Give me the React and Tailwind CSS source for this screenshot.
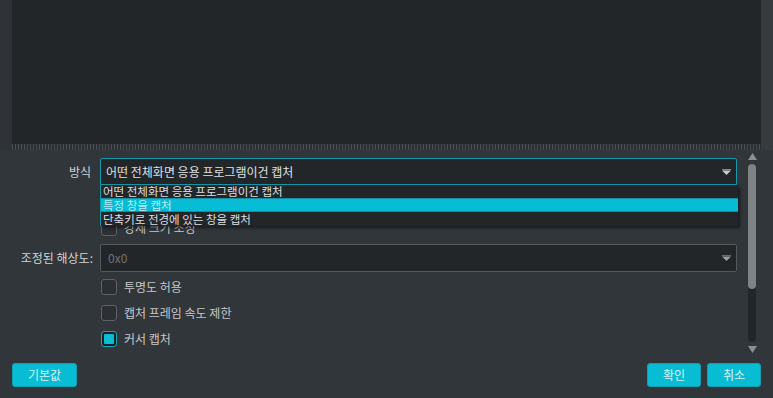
const font = { fontFamily: '"Noto Sans CJK KR", "Noto Sans", sans-serif' };

function Arrow({ color = "#c9cbcd" }) {
  return (
    <svg width="9" height="6" viewBox="0 0 9 6">
      <rect x="0" y="0" width="9" height="1" fill={color} opacity="0.6" />
      <path d="M0 1.5 H9 L4.5 6 Z" fill={color} />
    </svg>
  );
}

function Check({ label, checked }) {
  return (
    <div className="flex items-center h-4 gap-[7px]">
      {checked ? (
        <div className="w-4 h-4 rounded-[3px] border border-[#17a5b6] bg-[#1d2226] flex items-center justify-center">
          <div className="w-[10px] h-[10px] rounded-[1px] bg-[#0abcd3]" />
        </div>
      ) : (
        <div className="w-4 h-4 rounded-[3px] border border-[#5e6267] bg-[#2c3035]" />
      )}
      <span className="text-[12px] leading-none text-[#c5c7c9]">{label}</span>
    </div>
  );
}

export default function App() {
  return (
    <div
      className="w-[773px] h-[398px] bg-[#31363b] flex flex-col overflow-hidden"
      style={font}
    >
      <div className="flex h-[150px]">
        <div className="w-3 bg-[#2f3338]" />
        <div className="w-[749px] flex flex-col">
          <div className="h-[144px] bg-[#232629]" />
          <div className="h-[6px] bg-[repeating-linear-gradient(90deg,#4b5056_0px,#4b5056_1px,#2b2f33_1px,#2b2f33_3px)]" />
        </div>
        <div className="flex-1 bg-[#363b40]" />
      </div>

      <div className="flex h-[205px]">
        <div className="w-[737px] flex flex-col pt-2">
          <div className="flex items-center relative">
            <div className="w-[93px] text-right text-[12px] text-[#d2d4d6] pr-[2px]">방식</div>
            <div className="ml-[7px] w-[637px] h-[27px] border border-[#159aab] rounded-t-[2px] bg-[#232629] flex items-center justify-between pl-[5px] pr-[5px]">
              <span className="text-[12px] text-[#dfe1e3]">어떤 전체화면 응용 프로그램이건 캡처</span>
              <Arrow />
            </div>
            <div className="absolute left-[100px] top-[27px] w-[638px] h-[41px] bg-[#232629] border-l border-[#159aab] shadow-[2px_2px_3px_rgba(0,0,0,0.5)] flex flex-col text-[11.5px] leading-[11px] z-10">
              <div className="h-[13px] flex items-center pl-[2px] text-[#dcdee0]">어떤 전체화면 응용 프로그램이건 캡처</div>
              <div className="h-[14px] flex items-center pl-[2px] bg-[#07bcd5] border-y border-[#1690a1] text-[#b8ecf4]">특정 창을 캡처</div>
              <div className="h-[14px] flex items-center pl-[2px] text-[#dcdee0]">단축키로 전경에 있는 창을 캡처</div>
            </div>
          </div>

          <div className="pl-[101px] mt-[35px]">
            <Check label="강제 크기 조정" />
          </div>

          <div className="flex items-center mt-2">
            <div className="w-[93px] text-right text-[12px] text-[#d2d4d6]">조정된 해상도:</div>
            <div className="ml-[7px] w-[637px] h-[28px] border border-[#54595e] rounded-[2px] bg-[#232629] flex items-center justify-between pl-[7px] pr-[5px]">
              <span className="text-[12px] text-[#6f7377]">0x0</span>
              <Arrow color="#9a9da0" />
            </div>
          </div>

          <div className="pl-[101px] mt-[7px] flex flex-col gap-[10px]">
            <Check label="투명도 허용" />
            <Check label="캡처 프레임 속도 제한" />
            <Check label="커서 캡처" checked />
          </div>
        </div>

        <div className="ml-[11px] w-2 flex flex-col items-center pt-[3px]">
          <svg width="9" height="7" viewBox="0 0 9 7">
            <path d="M4.5 0 L9 7 H0 Z" fill="#8d9093" />
          </svg>
          <div className="mt-[4px] w-2 h-[178px] rounded-full bg-[#232629] flex flex-col">
            <div className="h-[125px] rounded-full bg-[#7f8386]" />
          </div>
          <svg className="mt-[4px]" width="9" height="7" viewBox="0 0 9 7">
            <path d="M0 0 H9 L4.5 7 Z" fill="#8d9093" />
          </svg>
        </div>
      </div>

      <div className="flex items-start pt-2 px-3">
        <button className="w-[65px] h-6 rounded-[3px] bg-[#08bcd4] border border-[#139fb2] text-[12px] text-[#d6f3f7]">
          기본값
        </button>
        <div className="flex-1" />
        <button className="w-[54px] h-6 rounded-[3px] bg-[#08bcd4] border border-[#139fb2] text-[12px] text-[#d6f3f7]">
          확인
        </button>
        <button className="ml-[6px] w-[54px] h-6 rounded-[3px] bg-[#08bcd4] border border-[#139fb2] text-[12px] text-[#d6f3f7]">
          취소
        </button>
      </div>
    </div>
  );
}
